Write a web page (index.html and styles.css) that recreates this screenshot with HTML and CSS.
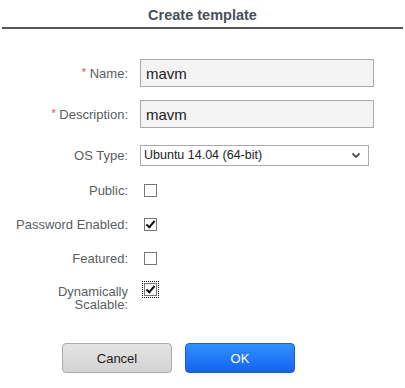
FILE: index.html
```html
<!DOCTYPE html>
<html lang="en">
<head>
    <meta charset="UTF-8">
    <meta name="viewport" content="width=device-width, initial-scale=1.0">
    <title>Create template</title>
    <link rel="stylesheet" href="styles.css">
</head>
<body>
    <div class="dialog">
        <div class="header">Create template</div>

        <form class="form">
            <div class="row">
                <label class="label"><span class="req">*</span> Name:</label>
                <div class="field"><input class="text" type="text" value="mavm"></div>
            </div>
            <div class="row">
                <label class="label"><span class="req">*</span> Description:</label>
                <div class="field"><input class="text" type="text" value="mavm"></div>
            </div>
            <div class="row os">
                <label class="label">OS Type:</label>
                <div class="field select-wrap">
                    <select class="select">
                        <option>Ubuntu 14.04 (64-bit)</option>
                    </select>
                    <svg class="chevron" width="10" height="7" viewBox="0 0 10 7">
                        <path d="M1.5 1.5 L5 5 L8.5 1.5" fill="none" stroke="#555" stroke-width="1.8"/>
                    </svg>
                </div>
            </div>
            <div class="row check">
                <label class="label">Public:</label>
                <div class="field"><input class="box" type="checkbox"></div>
            </div>
            <div class="row check">
                <label class="label">Password Enabled:</label>
                <div class="field"><input class="box" type="checkbox" checked></div>
            </div>
            <div class="row check">
                <label class="label">Featured:</label>
                <div class="field"><input class="box" type="checkbox"></div>
            </div>
            <div class="row check tall">
                <label class="label">Dynamically Scalable:</label>
                <div class="field"><input class="box focused" type="checkbox" checked></div>
            </div>

            <div class="buttons">
                <button type="button" class="btn cancel">Cancel</button>
                <button type="button" class="btn ok">OK</button>
            </div>
        </form>
    </div>
</body>
</html>
```

FILE: styles.css
```css
body {
    margin: 0;
    background: #fff;
    font-family: "Liberation Sans", Arial, sans-serif;
    color: #555;
}
.header {
    margin: 0 2px;
    height: 26px;
    padding-top: 1px;
    line-height: 28px;
    text-align: center;
    font-size: 14.5px;
    font-weight: bold;
    color: #4a4f57;
    border-bottom: 2px solid #555;
}
.form {
    padding-top: 30px;
}
.row {
    display: flex;
    align-items: center;
    min-height: 28px;
    margin-bottom: 13px;
}
.row.os {
    margin-bottom: 11px;
}
.row.check {
    min-height: 20px;
    margin-bottom: 14px;
}
.row.tall {
    align-items: flex-start;
}
.label {
    width: 116px;
    margin-left: 12px;
    margin-right: 12px;
    text-align: right;
    font-size: 13px;
    color: #5a5d61;
}
.row.tall .label {
    line-height: 13px;
    padding-top: 3px;
}
.req {
    color: #d9534f;
    font-size: 11px;
    vertical-align: 2px;
}
.field {
    display: flex;
    align-items: center;
}
.text {
    box-sizing: border-box;
    width: 234px;
    height: 28px;
    padding: 0 5px;
    margin: 0;
    border: 1px solid #aaa;
    background: #f3f3f3;
    font-family: "Liberation Sans", Arial, sans-serif;
    font-size: 15px;
    color: #222;
    outline: none;
}
.select-wrap {
    position: relative;
}
.select {
    box-sizing: border-box;
    width: 229px;
    height: 21px;
    margin: 0;
    padding: 0 3px;
    border: 1px solid #aaa;
    border-radius: 0;
    background: #fff;
    appearance: none;
    -webkit-appearance: none;
    font-family: "Liberation Sans", Arial, sans-serif;
    font-size: 12.5px;
    color: #222;
}
.chevron {
    position: absolute;
    right: 8px;
    top: 7px;
    pointer-events: none;
}
.box {
    appearance: none;
    -webkit-appearance: none;
    position: relative;
    box-sizing: border-box;
    width: 13px;
    height: 13px;
    margin: 3px 3px 3px 4px;
    border: 1px solid #777;
    background: #fff;
}
.box:checked::after {
    content: "";
    position: absolute;
    left: 3px;
    top: 0;
    width: 3px;
    height: 7px;
    border-right: 2.5px solid #111;
    border-bottom: 2.5px solid #111;
    transform: rotate(40deg);
}
.row.tall .box {
    margin-top: 1px;
}
.box.focused {
    outline: 1px dotted #111;
    outline-offset: 1px;
}
.buttons {
    display: flex;
    gap: 13px;
    padding-left: 62px;
    margin-top: 32px;
}
.btn {
    box-sizing: border-box;
    width: 110px;
    height: 30px;
    border-radius: 4px;
    font-family: "Liberation Sans", Arial, sans-serif;
    font-size: 13px;
    cursor: pointer;
}
.cancel {
    background: linear-gradient(#e4e4e4, #d3d3d3);
    border: 1px solid #aaa;
    color: #222;
}
.ok {
    background: linear-gradient(#3390ff, #1462f0);
    border: 1px solid #1c5bd6;
    color: #fff;
}
```
